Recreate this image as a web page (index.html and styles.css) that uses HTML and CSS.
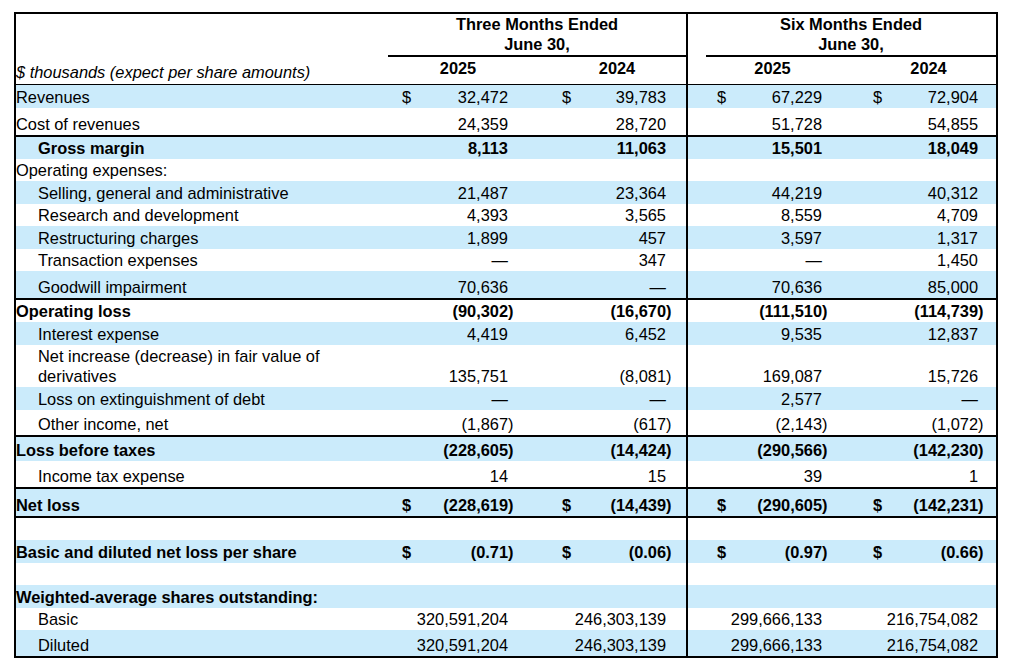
FILE: index.html
```html
<!DOCTYPE html>
<html lang="en">
<head>
<meta charset="utf-8">
<title>Statement of Operations</title>
<link rel="stylesheet" href="styles.css">
</head>
<body>
<div class="stmt">
  <div class="row head1">
    <div class="lbl"></div>
    <div class="grp g3"><div class="grp-in">Three Months Ended<br>June 30,</div></div>
    <div class="grp g6"><div class="grp-in">Six Months Ended<br>June 30,</div></div>
  </div>
  <div class="row head2">
    <div class="lbl unit">$ thousands (expect per share amounts)</div>
    <div class="yr n1">2025</div>
    <div class="yr n2">2024</div>
    <div class="yr n3">2025</div>
    <div class="yr n4">2024</div>
  </div>
  <div class="body">
    <div class="row h23">
      <div class="lbl">Revenues</div>
      <div class="n n1"><span class="cur">$</span><span class="amt">32,472</span></div>
      <div class="n n2"><span class="cur">$</span><span class="amt">39,783</span></div>
      <div class="n n3"><span class="cur">$</span><span class="amt">67,229</span></div>
      <div class="n n4"><span class="cur">$</span><span class="amt">72,904</span></div>
    </div>
    <div class="row h29 rule">
      <div class="lbl">Cost of revenues</div>
      <div class="n n1"><span class="amt">24,359</span></div>
      <div class="n n2"><span class="amt">28,720</span></div>
      <div class="n n3"><span class="amt">51,728</span></div>
      <div class="n n4"><span class="amt">54,855</span></div>
    </div>
    <div class="row h22 bold">
      <div class="lbl ind">Gross margin</div>
      <div class="n n1"><span class="amt">8,113</span></div>
      <div class="n n2"><span class="amt">11,063</span></div>
      <div class="n n3"><span class="amt">15,501</span></div>
      <div class="n n4"><span class="amt">18,049</span></div>
    </div>
    <div class="row h22">
      <div class="lbl">Operating expenses:</div>
      <div class="n n1"></div>
      <div class="n n2"></div>
      <div class="n n3"></div>
      <div class="n n4"></div>
    </div>
    <div class="row h23">
      <div class="lbl ind">Selling, general and administrative</div>
      <div class="n n1"><span class="amt">21,487</span></div>
      <div class="n n2"><span class="amt">23,364</span></div>
      <div class="n n3"><span class="amt">44,219</span></div>
      <div class="n n4"><span class="amt">40,312</span></div>
    </div>
    <div class="row h22">
      <div class="lbl ind">Research and development</div>
      <div class="n n1"><span class="amt">4,393</span></div>
      <div class="n n2"><span class="amt">3,565</span></div>
      <div class="n n3"><span class="amt">8,559</span></div>
      <div class="n n4"><span class="amt">4,709</span></div>
    </div>
    <div class="row h23">
      <div class="lbl ind">Restructuring charges</div>
      <div class="n n1"><span class="amt">1,899</span></div>
      <div class="n n2"><span class="amt">457</span></div>
      <div class="n n3"><span class="amt">3,597</span></div>
      <div class="n n4"><span class="amt">1,317</span></div>
    </div>
    <div class="row h22">
      <div class="lbl ind">Transaction expenses</div>
      <div class="n n1"><span class="amt">—</span></div>
      <div class="n n2"><span class="amt">347</span></div>
      <div class="n n3"><span class="amt">—</span></div>
      <div class="n n4"><span class="amt">1,450</span></div>
    </div>
    <div class="row h29 rule">
      <div class="lbl ind">Goodwill impairment</div>
      <div class="n n1"><span class="amt">70,636</span></div>
      <div class="n n2"><span class="amt">—</span></div>
      <div class="n n3"><span class="amt">70,636</span></div>
      <div class="n n4"><span class="amt">85,000</span></div>
    </div>
    <div class="row h22 bold">
      <div class="lbl">Operating loss</div>
      <div class="n n1"><span class="amt neg">(90,302)</span></div>
      <div class="n n2"><span class="amt neg">(16,670)</span></div>
      <div class="n n3"><span class="amt neg">(111,510)</span></div>
      <div class="n n4"><span class="amt neg">(114,739)</span></div>
    </div>
    <div class="row h23">
      <div class="lbl ind">Interest expense</div>
      <div class="n n1"><span class="amt">4,419</span></div>
      <div class="n n2"><span class="amt">6,452</span></div>
      <div class="n n3"><span class="amt">9,535</span></div>
      <div class="n n4"><span class="amt">12,837</span></div>
    </div>
    <div class="row h42">
      <div class="lbl ind">Net increase (decrease) in fair value of<br>derivatives</div>
      <div class="n n1"><span class="amt">135,751</span></div>
      <div class="n n2"><span class="amt neg">(8,081)</span></div>
      <div class="n n3"><span class="amt">169,087</span></div>
      <div class="n n4"><span class="amt">15,726</span></div>
    </div>
    <div class="row h23">
      <div class="lbl ind">Loss on extinguishment of debt</div>
      <div class="n n1"><span class="amt">—</span></div>
      <div class="n n2"><span class="amt">—</span></div>
      <div class="n n3"><span class="amt">2,577</span></div>
      <div class="n n4"><span class="amt">—</span></div>
    </div>
    <div class="row h27 rule">
      <div class="lbl ind">Other income, net</div>
      <div class="n n1"><span class="amt neg">(1,867)</span></div>
      <div class="n n2"><span class="amt neg">(617)</span></div>
      <div class="n n3"><span class="amt neg">(2,143)</span></div>
      <div class="n n4"><span class="amt neg">(1,072)</span></div>
    </div>
    <div class="row h24 bold">
      <div class="lbl">Loss before taxes</div>
      <div class="n n1"><span class="amt neg">(228,605)</span></div>
      <div class="n n2"><span class="amt neg">(14,424)</span></div>
      <div class="n n3"><span class="amt neg">(290,566)</span></div>
      <div class="n n4"><span class="amt neg">(142,230)</span></div>
    </div>
    <div class="row h28 rule">
      <div class="lbl ind">Income tax expense</div>
      <div class="n n1"><span class="amt">14</span></div>
      <div class="n n2"><span class="amt">15</span></div>
      <div class="n n3"><span class="amt">39</span></div>
      <div class="n n4"><span class="amt">1</span></div>
    </div>
    <div class="row h29 rule bold">
      <div class="lbl">Net loss</div>
      <div class="n n1"><span class="cur">$</span><span class="amt neg">(228,619)</span></div>
      <div class="n n2"><span class="cur">$</span><span class="amt neg">(14,439)</span></div>
      <div class="n n3"><span class="cur">$</span><span class="amt neg">(290,605)</span></div>
      <div class="n n4"><span class="cur">$</span><span class="amt neg">(142,231)</span></div>
    </div>
    <div class="row h22">
      <div class="lbl"></div>
      <div class="n n1"></div>
      <div class="n n2"></div>
      <div class="n n3"></div>
      <div class="n n4"></div>
    </div>
    <div class="row h23 bold">
      <div class="lbl">Basic and diluted net loss per share</div>
      <div class="n n1"><span class="cur">$</span><span class="amt neg">(0.71)</span></div>
      <div class="n n2"><span class="cur">$</span><span class="amt neg">(0.06)</span></div>
      <div class="n n3"><span class="cur">$</span><span class="amt neg">(0.97)</span></div>
      <div class="n n4"><span class="cur">$</span><span class="amt neg">(0.66)</span></div>
    </div>
    <div class="row h22">
      <div class="lbl"></div>
      <div class="n n1"></div>
      <div class="n n2"></div>
      <div class="n n3"></div>
      <div class="n n4"></div>
    </div>
    <div class="row h23 bold">
      <div class="lbl">Weighted-average shares outstanding:</div>
      <div class="n n1"></div>
      <div class="n n2"></div>
      <div class="n n3"></div>
      <div class="n n4"></div>
    </div>
    <div class="row h22">
      <div class="lbl ind">Basic</div>
      <div class="n n1"><span class="amt">320,591,204</span></div>
      <div class="n n2"><span class="amt">246,303,139</span></div>
      <div class="n n3"><span class="amt">299,666,133</span></div>
      <div class="n n4"><span class="amt">216,754,082</span></div>
    </div>
    <div class="row h26">
      <div class="lbl ind">Diluted</div>
      <div class="n n1"><span class="amt">320,591,204</span></div>
      <div class="n n2"><span class="amt">246,303,139</span></div>
      <div class="n n3"><span class="amt">299,666,133</span></div>
      <div class="n n4"><span class="amt">216,754,082</span></div>
    </div>
  </div>
</div>
</body>
</html>
```

FILE: styles.css
```css
* {
  box-sizing: border-box;
}

html, body {
  margin: 0;
  padding: 0;
  background: #ffffff;
}

body {
  font-family: "Liberation Sans", Arial, sans-serif;
  font-size: 16.4px;
  line-height: 20px;
  color: #000;
}

.stmt {
  width: 984px;
  margin: 12px 0 0 14px;
  border: 2px solid #000;
}

.row {
  display: grid;
  grid-template-columns: 372px 142px 158px 163px 145px;
  align-items: stretch;
}

.row > div {
  display: flex;
  align-items: flex-end;
  padding-bottom: 1px;
}

/* header */
.head1 {
  height: 43px;
}

.head1 > .grp {
  padding-bottom: 0;
  align-items: stretch;
  font-weight: bold;
  text-align: center;
}

.g3 {
  grid-column: 2 / span 2;
  border-right: 2px solid #000;
}

.g6 {
  grid-column: 4 / span 2;
}

.grp-in {
  flex: 1;
  border-bottom: 2px solid #000;
  padding-bottom: 1px;
}

.g6 .grp-in {
  margin-left: 18px;
}

.head2 {
  height: 28px;
  border-bottom: 1px solid #000;
}

.head2 > .unit {
  font-style: italic;
  padding-bottom: 2px;
}

.head2 > .yr {
  align-items: flex-start;
  justify-content: center;
  padding-top: 1px;
  font-weight: bold;
}

/* columns */
.lbl {
  padding-left: 0;
  white-space: nowrap;
}

.lbl.ind {
  padding-left: 22px;
}

.n1 {
  padding-left: 14px;
  padding-right: 16px;
}

.n2 {
  padding-left: 32px;
  padding-right: 14px;
  border-right: 2px solid #000;
}

.n3 {
  padding-left: 29px;
  padding-right: 23px;
}

.n4 {
  padding-left: 22px;
  padding-right: 12px;
}

.n {
  justify-content: space-between;
}

.n .amt {
  margin-left: auto;
  padding-right: 6px;
  white-space: nowrap;
}

.n .amt.neg {
  padding-right: 0.5px;
}

.bold {
  font-weight: bold;
}

/* body rows */
.body .row:nth-child(odd) {
  background: #cbebfb;
}

.rule {
  border-bottom: 2px solid #000;
}

.h22 { height: 22px; }
.h23 { height: 23px; }
.h24 { height: 24px; }
.h26 { height: 26px; }
.h27 { height: 27px; }
.h28 { height: 28px; }
.h29 { height: 29px; }
.h42 { height: 42px; }
```
